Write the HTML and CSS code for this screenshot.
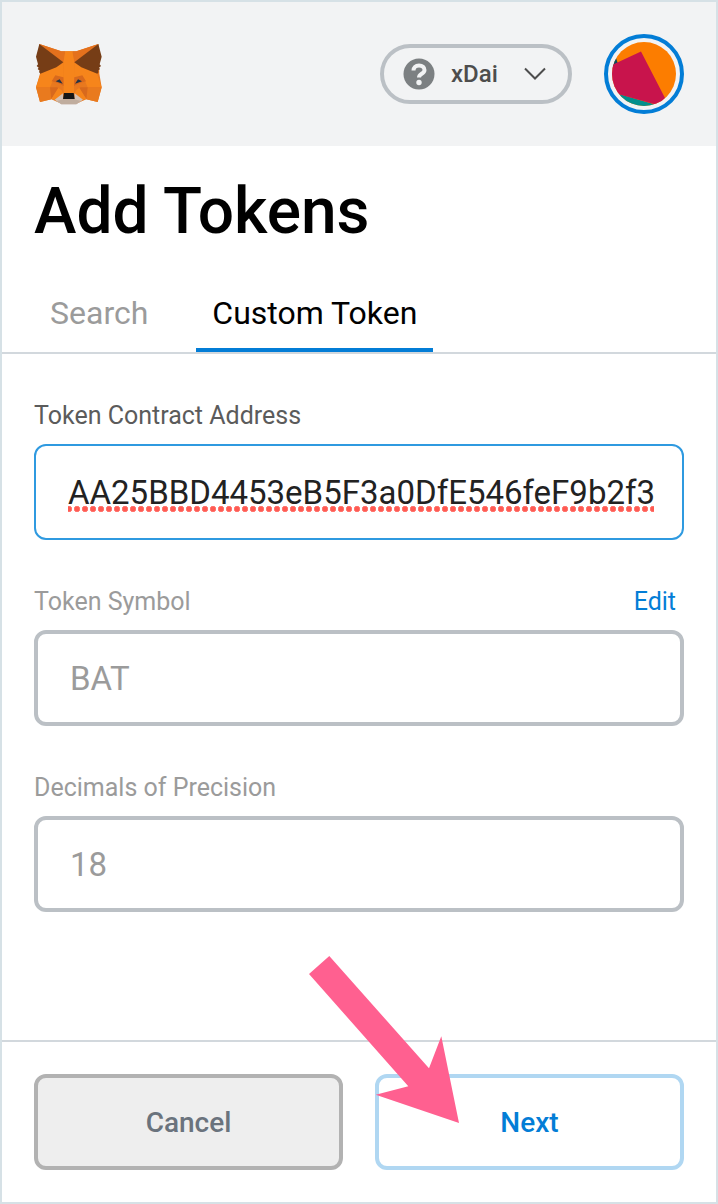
FILE: index.html
```
<!DOCTYPE html>
<html lang="en">
<head>
  <meta charset="UTF-8" />
  <meta name="viewport" content="width=device-width, initial-scale=1.0"/>
  <title>MetaMask - Add Tokens</title>
  <link rel="stylesheet" href="styles.css">
</head>
<body>
  <div class="app">
    <header class="header">
      <svg class="logo" viewBox="30 24 204 192" role="img" aria-label="MetaMask">
        <!-- head -->
        <path fill="#e8791f" d="M46 30L112 52H157L223 30 226 119 233 160 221 204 187 196 160 208H109L82 196 48 204 36 160 48 119z"/>
        <path fill="#e4711d" d="M46 30L112 52H124L118 86zM223 30L157 52H145L151 86z"/>
        <path fill="#f6851b" d="M124 52H145L151 86 150 178H119L118 86z"/>
        <path fill="#f6851b" d="M50 118L97 99 118 86 119 130 90 133 78 160H36zM219 118L172 99 151 86 150 130 179 133 191 160H233z"/>
        <!-- cheeks -->
        <path fill="#e97a1e" d="M36 160H78L82 196 48 204zM233 160H191L187 196 221 204z"/>
        <path fill="#d8691d" d="M78 160H106L82 195zM191 160H163L187 195z"/>
        <path fill="#f6851b" d="M106 158L118 178 94 198 82 195 104 160zM163 158L151 178 175 198 187 195 165 160z"/>
        <!-- brows and eyes -->
        <path fill="#d8691d" d="M94 124L118 130 119 156 108 150 83 142zM175 124L151 130 150 156 161 150 186 142z"/>
        <path fill="#e9781e" d="M83 142L108 150 112 168 100 160zM186 142L161 150 157 168 169 160z"/>
        <path fill="#233447" d="M95 142L107 136 116 149zM174 142L162 136 153 149z"/>
        <!-- muzzle -->
        <path fill="#d5c0b2" d="M92 197L117 178 118 196H151L152 178 177 197 157 211H112z"/>
        <path fill="#c0ad9e" d="M98 201L118 196H151L171 201 157 211H112z"/>
        <path fill="#161616" d="M120 177H149L152 195H117z"/>
        <!-- ears -->
        <path fill="#763d16" d="M46 30L118 85 97 100 49 119 45 114 47 110 41 105 44 101 38 96 42 91 36 68z"/>
        <path fill="#763d16" d="M223 30L151 85 172 100 220 119 224 114 222 110 228 105 225 101 231 96 227 91 233 68z"/>
      </svg>

      <div class="header-right">
        <label class="network">
          <svg class="network-icon" viewBox="0 0 32 32" aria-hidden="true">
            <circle cx="16" cy="16" r="15.5" fill="#7c8082"/>
            <path d="M10.500 12.500c0-3 2-5 5.500-5s5.500 2 5.500 4.500c0 4-5.500 3.600-5.500 7.500" fill="none" stroke="#f2f3f4" stroke-width="4"/>
            <circle cx="16" cy="24.500" r="2.700" fill="#f2f3f4"/>
          </svg>
          <select class="network-select" aria-label="Network">
            <option>xDai</option>
          </select>
          <svg class="chevron" viewBox="0 0 22 14" aria-hidden="true">
            <path d="M1 1.500l10 10 10-10" fill="none" stroke="#4d4d4d" stroke-width="2"/>
          </svg>
        </label>

        <button class="account" type="button" aria-label="Account">
          <svg class="avatar" viewBox="0 0 64 64" aria-hidden="true">
            <clipPath id="avatarClip"><circle cx="32" cy="32" r="32"/></clipPath>
            <g clip-path="url(#avatarClip)">
              <rect width="64" height="64" fill="#fc7d00"/>
              <path d="M0 12l4 4 2 6-8 4z" fill="#034f5d"/>
              <path d="M0 50l48 14H0z" fill="#018e8c"/>
              <path d="M-2 24L29 9.500 53 56l-4 8-7-2L6 52-2 46z" fill="#c8144c"/>
            </g>
          </svg>
        </button>
      </div>
    </header>

    <h1 class="title">Add Tokens</h1>

    <div class="tabs" role="tablist">
      <button class="tab" type="button" role="tab" aria-selected="false">Search</button>
      <button class="tab tab-active" type="button" role="tab" aria-selected="true">Custom Token</button>
    </div>

    <form class="form" id="tokenForm">
      <div class="field">
        <label class="label label-dark" for="address">Token Contract Address</label>
        <input class="input input-focused" id="address" type="text" value="AA25BBD4453eB5F3a0DfE546feF9b2f3" spellcheck="false" autocomplete="off">
      </div>
      <div class="field">
        <div class="label-row">
          <label class="label" for="symbol">Token Symbol</label>
          <button class="edit" type="button">Edit</button>
        </div>
        <input class="input" id="symbol" type="text" value="BAT" disabled>
      </div>
      <div class="field">
        <label class="label" for="decimals">Decimals of Precision</label>
        <input class="input" id="decimals" type="text" value="18" disabled>
      </div>
    </form>

    <footer class="footer">
      <button class="button button-cancel" type="button">Cancel</button>
      <button class="button button-next" type="submit" form="tokenForm">Next</button>
      <svg class="arrow" viewBox="0 0 150 167" aria-hidden="true">
        <path d="M0 18L20.300 0 120 112.300 132.300 80.300 150 167 66.700 138.700 99.300 130.300z" fill="#ff6090"/>
      </svg>
    </footer>
  </div>
</body>
</html>
```
FILE: styles.css
```
* {
  box-sizing: border-box;
}

body {
  margin: 0;
  background: #fff;
  font-family: Roboto, "Liberation Sans", sans-serif;
  color: #000;
}

button,
input,
select {
  font-family: inherit;
  margin: 0;
}

button {
  cursor: pointer;
}

.app {
  display: flex;
  flex-direction: column;
  min-height: 100vh;
  border: 2px solid #d6e1e6;
}

/* Header */
.header {
  display: flex;
  justify-content: space-between;
  align-items: center;
  padding: 32px;
  background: #f2f3f4;
}

.logo {
  width: 68px;
  height: 64px;
}

.header-right {
  display: flex;
  align-items: center;
  gap: 32px;
}

.network {
  display: flex;
  align-items: center;
  height: 60px;
  padding: 0 22px 0 19px;
  border: 4px solid #bbc0c5;
  border-radius: 30px;
}

.network-icon {
  width: 32px;
  height: 32px;
  margin-right: 16px;
}

.network-select {
  appearance: none;
  border: none;
  padding: 0;
  background: none;
  font-size: 24px;
  font-weight: 500;
  line-height: 28px;
  color: #4d4d4d;
}

.chevron {
  width: 22px;
  height: 14px;
  margin-left: 26px;
}

.account {
  width: 80px;
  height: 80px;
  padding: 4px;
  border: 4px solid #037dd6;
  border-radius: 50%;
  background: none;
}

.avatar {
  display: block;
  width: 64px;
  height: 64px;
}

/* Title and tabs */
.title {
  margin: 0;
  padding: 32px 32px 0;
  font-size: 64px;
  font-weight: 500;
  line-height: 68px;
}

.tabs {
  display: flex;
  gap: 32px;
  margin-top: 40px;
  padding: 0 32px;
  border-bottom: 2px solid #d2d8dd;
}

.tab {
  padding: 8px 16px 16px;
  border: none;
  border-bottom: 4px solid transparent;
  background: none;
  font-size: 32px;
  line-height: 38px;
  color: #9b9b9b;
}

.tab-active {
  border-bottom-color: #037dd6;
  color: #000;
}

/* Form */
.form {
  display: flex;
  flex-direction: column;
  flex-grow: 1;
  gap: 48px;
  padding: 48px 32px;
}

.field {
  display: flex;
  flex-direction: column;
  gap: 14px;
}

.label-row {
  display: flex;
  justify-content: space-between;
  padding-right: 8px;
}

.label {
  font-size: 25px;
  line-height: 28px;
  color: #9b9b9b;
}

.label-dark {
  color: #5b5b5b;
}

.edit {
  border: none;
  padding: 0;
  background: none;
  font-size: 25px;
  line-height: 28px;
  color: #037dd6;
}

.input {
  width: 100%;
  height: 96px;
  padding: 0 28px 0 32px;
  border: 4px solid #bbc0c5;
  border-radius: 12px;
  background: #fff;
  font-size: 33px;
  color: #9b9b9b;
}

.input-focused {
  border: 2px solid #2f9ae0;
  outline: none;
  color: #222;
  background-image: radial-gradient(circle, #ff5a52 2px, #ff8a84 3px, transparent 3px);
  background-repeat: repeat-x;
  background-size: 8px 6px;
  background-position: -3px 60px;
  background-origin: content-box;
  background-clip: content-box;
}

/* Footer */
.footer {
  position: relative;
  display: flex;
  gap: 32px;
  padding: 32px;
  border-top: 2px solid #d2d8dd;
}

.button {
  flex: 1;
  height: 96px;
  border-radius: 12px;
  font-size: 28px;
  font-weight: 500;
}

.button-cancel {
  border: 4px solid #b2b2b2;
  background: #eee;
  color: #6a737d;
}

.button-next {
  border: 4px solid #b0d7f2;
  background: #fff;
  color: #037dd6;
}

.arrow {
  position: absolute;
  top: -86px;
  left: calc(50% - 50px);
  width: 150px;
  height: 167px;
  pointer-events: none;
}
```
